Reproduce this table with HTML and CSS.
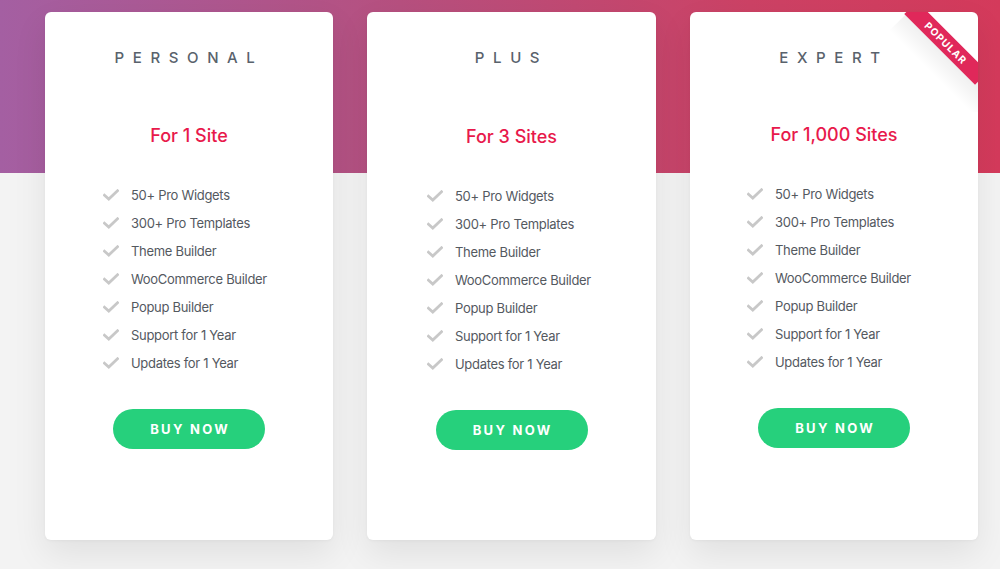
FILE: index.html
```html
<!DOCTYPE html>
<html lang="en">
<head>
<meta charset="utf-8">
<title>Pricing</title>
<link rel="stylesheet" href="styles.css">
</head>
<body>
<main class="pricing">
  <section class="card">
    <h2 class="plan">PERSONAL</h2>
    <p class="price">For 1 Site</p>
    <ul class="features">
      <li><svg class="check" viewBox="0 0 16 12"><path d="M1.5 6.2 L5.8 10 L14.5 1.8"/></svg>50+ Pro Widgets</li>
      <li><svg class="check" viewBox="0 0 16 12"><path d="M1.5 6.2 L5.8 10 L14.5 1.8"/></svg>300+ Pro Templates</li>
      <li><svg class="check" viewBox="0 0 16 12"><path d="M1.5 6.2 L5.8 10 L14.5 1.8"/></svg>Theme Builder</li>
      <li><svg class="check" viewBox="0 0 16 12"><path d="M1.5 6.2 L5.8 10 L14.5 1.8"/></svg>WooCommerce Builder</li>
      <li><svg class="check" viewBox="0 0 16 12"><path d="M1.5 6.2 L5.8 10 L14.5 1.8"/></svg>Popup Builder</li>
      <li><svg class="check" viewBox="0 0 16 12"><path d="M1.5 6.2 L5.8 10 L14.5 1.8"/></svg>Support for 1 Year</li>
      <li><svg class="check" viewBox="0 0 16 12"><path d="M1.5 6.2 L5.8 10 L14.5 1.8"/></svg>Updates for 1 Year</li>
    </ul>
    <a class="buy" href="#">BUY NOW</a>
  </section>
  <section class="card card-plus">
    <h2 class="plan">PLUS</h2>
    <p class="price">For 3 Sites</p>
    <ul class="features">
      <li><svg class="check" viewBox="0 0 16 12"><path d="M1.5 6.2 L5.8 10 L14.5 1.8"/></svg>50+ Pro Widgets</li>
      <li><svg class="check" viewBox="0 0 16 12"><path d="M1.5 6.2 L5.8 10 L14.5 1.8"/></svg>300+ Pro Templates</li>
      <li><svg class="check" viewBox="0 0 16 12"><path d="M1.5 6.2 L5.8 10 L14.5 1.8"/></svg>Theme Builder</li>
      <li><svg class="check" viewBox="0 0 16 12"><path d="M1.5 6.2 L5.8 10 L14.5 1.8"/></svg>WooCommerce Builder</li>
      <li><svg class="check" viewBox="0 0 16 12"><path d="M1.5 6.2 L5.8 10 L14.5 1.8"/></svg>Popup Builder</li>
      <li><svg class="check" viewBox="0 0 16 12"><path d="M1.5 6.2 L5.8 10 L14.5 1.8"/></svg>Support for 1 Year</li>
      <li><svg class="check" viewBox="0 0 16 12"><path d="M1.5 6.2 L5.8 10 L14.5 1.8"/></svg>Updates for 1 Year</li>
    </ul>
    <a class="buy" href="#">BUY NOW</a>
  </section>
  <section class="card card-expert">
    <div class="ribbon-wrap">
      <div class="ribbon-shadow"></div>
      <div class="ribbon">POPULAR</div>
    </div>
    <h2 class="plan">EXPERT</h2>
    <p class="price">For 1,000 Sites</p>
    <ul class="features">
      <li><svg class="check" viewBox="0 0 16 12"><path d="M1.5 6.2 L5.8 10 L14.5 1.8"/></svg>50+ Pro Widgets</li>
      <li><svg class="check" viewBox="0 0 16 12"><path d="M1.5 6.2 L5.8 10 L14.5 1.8"/></svg>300+ Pro Templates</li>
      <li><svg class="check" viewBox="0 0 16 12"><path d="M1.5 6.2 L5.8 10 L14.5 1.8"/></svg>Theme Builder</li>
      <li><svg class="check" viewBox="0 0 16 12"><path d="M1.5 6.2 L5.8 10 L14.5 1.8"/></svg>WooCommerce Builder</li>
      <li><svg class="check" viewBox="0 0 16 12"><path d="M1.5 6.2 L5.8 10 L14.5 1.8"/></svg>Popup Builder</li>
      <li><svg class="check" viewBox="0 0 16 12"><path d="M1.5 6.2 L5.8 10 L14.5 1.8"/></svg>Support for 1 Year</li>
      <li><svg class="check" viewBox="0 0 16 12"><path d="M1.5 6.2 L5.8 10 L14.5 1.8"/></svg>Updates for 1 Year</li>
    </ul>
    <a class="buy" href="#">BUY NOW</a>
  </section>
</main>
</body>
</html>
```

FILE: styles.css
```css
* { box-sizing: border-box; }

html, body {
  margin: 0;
  height: 100%;
}

body {
  font-family: Inter, "Noto Sans", "Liberation Sans", sans-serif;
  background-color: #f3f3f3;
  background-image: linear-gradient(90deg, #a45fa2 0%, #b6507f 40%, #cc4265 75%, #d43a5b 100%);
  background-size: 100% 173px;
  background-repeat: no-repeat;
  overflow: hidden;
}

.pricing {
  display: flex;
  gap: 34px;
  padding: 12px 0 0 45px;
}

.card {
  position: relative;
  width: 288px;
  height: 528px;
  background: #fff;
  border-radius: 6px;
  box-shadow: 0 14px 34px rgba(0, 0, 0, 0.08), 0 1px 3px rgba(0, 0, 0, 0.04);
  display: flex;
  flex-direction: column;
  align-items: stretch;
  padding-top: 36px;
}

.card-plus { width: 289px; }

.plan {
  margin: 0;
  text-align: center;
  font-size: 15px;
  line-height: 20px;
  font-weight: 500;
  letter-spacing: 8.6px;
  color: #59626c;
}

.price {
  margin: 56px 0 0;
  text-align: center;
  font-size: 18px;
  line-height: 24px;
  font-weight: 500;
  color: #e8194b;
}

.card-plus .price { margin-top: 57px; }
.card-expert .price { margin-top: 55px; }

.features {
  list-style: none;
  margin: 33px 0 0;
  padding: 0 0 0 58px;
}

.card-plus .features { padding-left: 60px; }
.card-expert .features { padding-left: 57px; }

.features li {
  display: flex;
  align-items: center;
  height: 28px;
  font-size: 13px;
  letter-spacing: -0.3px;
  color: #54595f;
}

.check {
  width: 16px;
  height: 12px;
  margin-right: 12px;
  flex: none;
}

.check path {
  fill: none;
  stroke: #c8c8c8;
  stroke-width: 2.8;
  stroke-linecap: square;
}

.buy {
  align-self: center;
  margin-top: 32px;
  width: 152px;
  height: 40px;
  border-radius: 20px;
  background: #26d07c;
  color: #fff;
  text-decoration: none;
  font-size: 13px;
  font-weight: 700;
  letter-spacing: 2.3px;
  text-indent: 2.3px;
  display: flex;
  align-items: center;
  justify-content: center;
}

.ribbon-wrap {
  position: absolute;
  top: 0;
  right: 0;
  width: 100px;
  height: 100px;
  overflow: hidden;
  border-top-right-radius: 6px;
}

.ribbon {
  position: absolute;
  top: 22px;
  right: -18px;
  width: 100px;
  height: 18px;
  transform: rotate(45deg);
  background: #e0285a;
  color: #fff;
  font-size: 10px;
  font-weight: 700;
  letter-spacing: 1px;
  line-height: 18px;
  text-align: center;
}

.ribbon-shadow {
  position: absolute;
  top: 36px;
  right: -34px;
  width: 130px;
  height: 34px;
  transform: rotate(45deg);
  background: linear-gradient(180deg, rgba(0, 0, 0, 0.09) 0%, rgba(0, 0, 0, 0) 100%);
}
```
